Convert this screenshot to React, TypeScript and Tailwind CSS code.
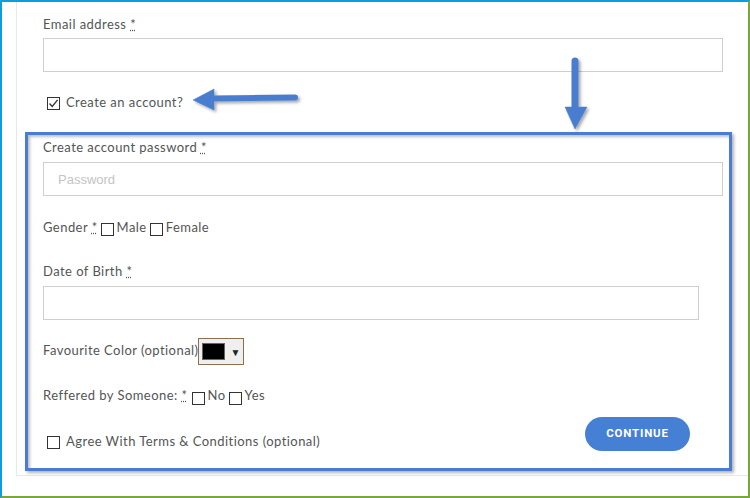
import React from "react";

const Box = ({ checked = false, className = "" }: { checked?: boolean; className?: string }) => (
  <span
    className={
      "inline-flex shrink-0 w-[13px] h-[13px] border border-[#333] bg-white items-center justify-center " +
      className
    }
  >
    {checked && (
      <svg width="11" height="11" viewBox="0 0 11 11">
        <path d="M1.5 5.5 L4.2 8.4 L9.6 1.8" fill="none" stroke="#333" strokeWidth="1.3" />
      </svg>
    )}
  </span>
);

const Req = () => (
  <abbr title="required" className="underline decoration-dotted">
    *
  </abbr>
);

const Arrows = () => (
  <svg
    className="absolute top-0 left-0 pointer-events-none"
    width="750"
    height="498"
    viewBox="0 0 750 498"
  >
    <defs>
      <filter id="sh" x="-20%" y="-20%" width="140%" height="140%">
        <feDropShadow dx="2" dy="2" stdDeviation="1.5" floodColor="#000" floodOpacity="0.35" />
      </filter>
    </defs>
    <g transform="translate(-2,-2)" filter="url(#sh)" fill="#4a7dcf" stroke="#4a7dcf">
      <line x1="210" y1="98.5" x2="295" y2="97.5" strokeWidth="6" strokeLinecap="round" />
      <polygon points="193,100 214,89 214,110" strokeWidth="0.5" />
      <line x1="575" y1="61" x2="575" y2="110" strokeWidth="7" strokeLinecap="round" />
      <polygon points="565,107 587,107 575,129" strokeWidth="0.5" />
    </g>
  </svg>
);

export default function App() {
  const label = "h-[20px] leading-[20px]";
  return (
    <div
      className="relative w-[750px] h-[498px] overflow-hidden bg-white border-t-2 border-l-2 border-r-2 border-b-2 border-t-[#0d9ddf] border-l-[#0d9ddf] border-r-[#76a83a] border-b-[#76a83a] text-[13px] tracking-[0.45px] text-[#555] font-['Lato',sans-serif]"
    >
      <div className="ml-[14px] h-[474px] border-l border-b border-[#e8e8e8] pl-[8px]">
        {/* email */}
        <div className="pl-[18px] pt-[12px]">
          <div className={label}>
            Email address <Req />
          </div>
          <input type="email" className="block mt-[4px] h-[34px] w-[680px] border border-[#cfcfcf] outline-none" />
          <div className="mt-[20px] flex items-start h-[20px]">
            <Box checked className="ml-[4px] mt-[5px]" />
            <span className="ml-[6px] leading-[20px]">Create an account?</span>
          </div>
        </div>

        {/* account box */}
        <div className="mt-[20px] w-[707px] border-[3px] border-[#4a7dcf] pl-[15px] pr-[6px] pt-[2px] pb-[17px] bg-white shadow-[2px_2px_3px_rgba(0,0,0,0.3),inset_2px_2px_3px_rgba(0,0,0,0.25)]">
          <div className={label}>
            Create account password <Req />
          </div>
          <input
            type="password"
            placeholder="Password"
            className="block mt-[5px] h-[34px] w-full border border-[#cfcfcf] pl-[14px] outline-none font-['Liberation_Sans',Arial,sans-serif] tracking-normal text-[13px] placeholder:text-[#c4c4c4]"
          />

          <div className="mt-[21px] flex items-start h-[20px] leading-[20px]">
            <span>
              Gender <Req />
            </span>
            <Box className="ml-[3px] mt-[6px]" />
            <span className="ml-[3px]">Male</span>
            <Box className="ml-[3px] mt-[6px]" />
            <span className="ml-[3px]">Female</span>
          </div>

          <div className={"mt-[24px] " + label}>
            Date of Birth <Req />
          </div>
          <input type="text" className="block mt-[5px] h-[34px] w-[656px] border border-[#cfcfcf] outline-none" />

          <div className="mt-[18px] flex items-start h-[27px]">
            <span className="mt-[2px] leading-[20px]">Favourite Color (optional)</span>
            <div className="w-[46px] h-[27px] border border-[#8e6e50] bg-[#efefef] flex items-center pl-[3px]">
              <span className="w-[23px] h-[17px] bg-black border border-[#666]" />
              <span className="ml-[5px] text-[10px] text-[#222] leading-none tracking-normal">▼</span>
            </div>
          </div>

          <div className="mt-[20px] flex items-start h-[20px] leading-[20px]">
            <span>
              Reffered by Someone: <Req />
            </span>
            <Box className="ml-[4px] mt-[7px]" />
            <span className="ml-[3px]">No</span>
            <Box className="ml-[3px] mt-[7px]" />
            <span className="ml-[3px]">Yes</span>
          </div>

          <div className="mt-[12px] flex justify-between items-start">
            <div className="mt-[14px] flex items-start h-[20px]">
              <Box className="ml-[4px] mt-[5px]" />
              <span className="ml-[6px] leading-[20px]">Agree With Terms &amp; Conditions (optional)</span>
            </div>
            <button className="mr-[33px] h-[34px] w-[105px] rounded-full bg-[#4680d4] text-white text-[11.5px] font-bold tracking-[0.8px] font-['Roboto',sans-serif]">
              CONTINUE
            </button>
          </div>
        </div>
      </div>
      <Arrows />
    </div>
  );
}
